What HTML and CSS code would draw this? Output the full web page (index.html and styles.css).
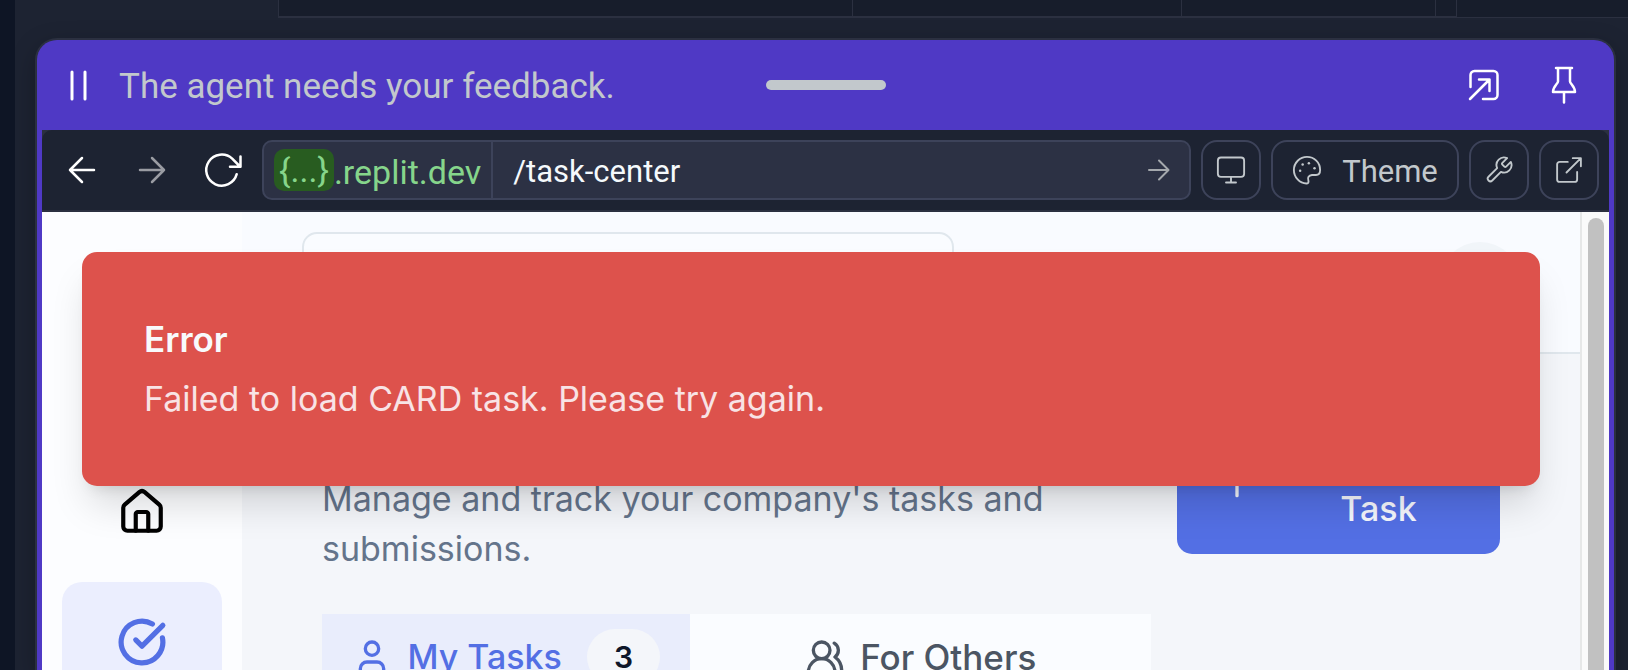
FILE: index.html
```html
<!DOCTYPE html>
<html lang="en">
<head>
<meta charset="utf-8">
<meta name="viewport" content="width=device-width, initial-scale=1">
<title>Task Center</title>
<link rel="stylesheet" href="styles.css">
</head>
<body>
<div class="workspace">
  <div class="panes">
    <div class="pane pane-a"></div>
    <div class="pane pane-b"></div>
    <div class="pane pane-c"></div>
    <div class="pane pane-d"></div>
    <div class="pane-end"></div>
  </div>

  <section class="window">
    <header class="titlebar">
      <div class="status">
        <svg class="pause" viewBox="0 0 22 34" aria-hidden="true"><path d="M5 4v27M18 4v27"/></svg>
        <span>The agent needs your feedback.</span>
      </div>
      <div class="handle"></div>
      <div class="window-actions">
        <button type="button" class="ghost" aria-label="Pop out">
          <svg viewBox="0 0 32 32" aria-hidden="true"><path d="M2.500 18V6a4 4 0 0 1 4-4h19a4 4 0 0 1 4 4v20a4 4 0 0 1-4 4H15M2 30 21.500 10.500M11 10.500h10.500V22"/></svg>
        </button>
        <button type="button" class="ghost" aria-label="Pin">
          <svg class="pin" viewBox="0 0 26 38" aria-hidden="true"><path d="M5 2h16M7 2v13.500c0 2-5 5-5 10.500h22c0-5.500-5-8.500-5-10.500V2M13 26v10.500"/></svg>
        </button>
      </div>
    </header>

    <div class="browser">
      <nav class="toolbar" aria-label="Preview">
        <button type="button" class="nav-button" aria-label="Back">
          <svg viewBox="0 0 28 28" aria-hidden="true"><path d="M26 14H2M14 26 2 14 14 2"/></svg>
        </button>
        <button type="button" class="nav-button muted" aria-label="Forward">
          <svg viewBox="0 0 28 28" aria-hidden="true"><path d="M2 14h24M14 2l12 12-12 12"/></svg>
        </button>
        <button type="button" class="nav-button" aria-label="Reload">
          <svg class="reload" viewBox="0 0 38 36" aria-hidden="true"><path d="M33.700 22.200A15.500 15.500 0 1 1 29.200 6.700L36.500 14M37.500 4.500v10.300H27"/></svg>
        </button>
        <div class="address">
          <span class="domain"><span class="host">{...}</span><span class="suffix">.replit.dev</span></span>
          <input class="path" type="text" value="/task-center" aria-label="Path">
          <button type="button" class="go" aria-label="Go">
            <svg viewBox="0 0 22 22" aria-hidden="true"><path d="M1 11h19M11 1.500l9.500 9.500-9.500 9.500"/></svg>
          </button>
        </div>
        <button type="button" class="tool" aria-label="Device size">
          <svg viewBox="0 0 24 24" aria-hidden="true"><rect x="1.500" y="2" width="21" height="15.500" rx="2.500"/><path d="M12 17.500V22M8 22h8"/></svg>
        </button>
        <button type="button" class="tool theme">
          <svg viewBox="0 0 24 24" aria-hidden="true"><path d="M12 1.500C6.200 1.500 1.500 6.200 1.500 12S6.200 22.800 11.500 22.800c1.500 0 2-1 1.600-2.300-.9-2.400.3-4.300 2.900-4.500h3.200c2.200 0 3.300-1.600 3.300-4C22.500 6 17.800 1.500 12 1.500z"/><g class="dots"><circle cx="13.500" cy="6.500" r="1"/><circle cx="18" cy="10.500" r="1"/><circle cx="8.500" cy="7.500" r="1"/><circle cx="6.500" cy="12.500" r="1"/></g></svg>
          <span>Theme</span>
        </button>
        <button type="button" class="tool" aria-label="Developer tools">
          <svg viewBox="0 0 24 24" aria-hidden="true"><path d="M14.700 6.300a1 1 0 0 0 0 1.400l1.600 1.600a1 1 0 0 0 1.400 0l3.770-3.770a6 6 0 0 1-7.940 7.940l-6.910 6.910a2.120 2.120 0 0 1-3-3l6.910-6.910a6 6 0 0 1 7.940-7.940l-3.760 3.760z"/></svg>
        </button>
        <button type="button" class="tool" aria-label="Open in new tab">
          <svg viewBox="0 0 24 24" aria-hidden="true"><path d="M15 2.500h6.500V9M21.500 2.500 10 14M18.500 13.500v6a2 2 0 0 1-2 2h-12a2 2 0 0 1-2-2v-12a2 2 0 0 1 2-2H11"/></svg>
        </button>
      </nav>

      <div class="viewport">
        <aside class="sidebar">
          <a class="side-link" href="#home" aria-label="Home">
            <svg viewBox="0 0 24 24" aria-hidden="true"><path d="M15 21v-8a1 1 0 0 0-1-1h-4a1 1 0 0 0-1 1v8"/><path d="M3 10a2 2 0 0 1 .709-1.528l7-5.999a2 2 0 0 1 2.582 0l7 5.999A2 2 0 0 1 21 10v9a2 2 0 0 1-2 2H5a2 2 0 0 1-2-2z"/></svg>
          </a>
          <a class="side-link active" href="#tasks" aria-label="Task center">
            <svg viewBox="0 0 24 24" aria-hidden="true"><path d="M21.801 10A10 10 0 1 1 17 3.335"/><path d="m9 11 3 3L22 4"/></svg>
          </a>
        </aside>

        <div class="page">
          <header class="page-header">
            <input class="search" type="search" aria-label="Search">
            <div class="avatar"></div>
          </header>
          <main class="content">
            <div class="intro">
              <p class="intro-text">Manage and track your company's tasks and submissions.</p>
              <button type="button" class="create">
                <svg viewBox="0 0 24 24" aria-hidden="true"><path d="M5 12h14M12 5v14"/></svg>
                <span>Create<br>Task</span>
              </button>
            </div>
            <div class="tabs" role="tablist">
              <button type="button" class="tab selected" role="tab" aria-selected="true">
                <svg viewBox="0 0 24 24" aria-hidden="true"><path d="M19 21v-2a4 4 0 0 0-4-4H9a4 4 0 0 0-4 4v2"/><circle cx="12" cy="7" r="4"/></svg>
                <span>My Tasks</span>
                <span class="count">3</span>
              </button>
              <button type="button" class="tab" role="tab" aria-selected="false">
                <svg viewBox="0 0 24 24" aria-hidden="true"><path d="M18 21a8 8 0 0 0-16 0"/><circle cx="10" cy="8" r="5"/><path d="M22 20c0-3.370-2-6.500-4-8a5 5 0 0 0-.45-8.300"/></svg>
                <span>For Others</span>
              </button>
            </div>
          </main>
        </div>

        <div class="scrollbar"><div class="thumb"></div></div>

        <div class="toast" role="alert">
          <strong>Error</strong>
          <span>Failed to load CARD task. Please try again.</span>
        </div>
      </div>
    </div>
  </section>
</div>
</body>
</html>
```
FILE: styles.css
```css
* {
  box-sizing: border-box;
}

body {
  margin: 0;
  background: #0e1525;
  font-family: Inter, "Noto Sans", sans-serif;
  font-size: 34px;
  line-height: 50px;
}

button,
input {
  margin: 0;
  padding: 0;
  border: 0;
  background: none;
  color: inherit;
  font: inherit;
}

svg {
  display: block;
  flex: none;
  fill: none;
  stroke: currentColor;
  stroke-linecap: round;
  stroke-linejoin: round;
}

p {
  margin: 0;
}

.workspace {
  display: flex;
  flex-direction: column;
  height: 100vh;
  margin-left: 15px;
  overflow: hidden;
  background: #1d2332;
}

/* Editor panes behind the preview window */
.panes {
  display: flex;
  flex: none;
  height: 18px;
  margin-left: 263px;
}

.pane {
  border-left: 1px solid #2b3040;
  border-bottom: 2px solid #2b3040;
  background: #171d2b;
}

.pane-a { flex: 575; }
.pane-b { flex: 329; }
.pane-c { flex: 254; }
.pane-d { flex: 20; }

.pane-end {
  flex: 172;
  border-left: 1px solid #2b3040;
  border-bottom: 1px solid #2b3040;
  background: #171d2b;
}

/* Floating window */
.window {
  display: flex;
  flex: 1;
  flex-direction: column;
  min-height: 0;
  margin: 20px 12px 0 20px;
  padding: 0 5px;
  border: 2px solid #2b3040;
  border-bottom: 0;
  border-radius: 22px 22px 0 0;
  background: #4f39c5;
  box-shadow: 0 8px 24px rgba(0, 0, 0, 0.25);
}

.titlebar {
  display: grid;
  flex: none;
  grid-template-columns: 1fr auto 1fr;
  align-items: center;
  height: 90px;
  padding: 0 15px;
}

.status {
  display: flex;
  align-items: center;
  gap: 30px;
  padding-left: 10px;
  color: #c2c8cc;
  font-family: Roboto, "Noto Sans", sans-serif;
  font-size: 35px;
  white-space: nowrap;
}

.status span,
.suffix,
.theme span {
  padding-top: 3px;
}

.pause {
  width: 22px;
  height: 34px;
  color: #fff;
  stroke-width: 3;
}

.handle {
  width: 120px;
  height: 10px;
  border-radius: 5px;
  background: #c2c8cc;
}

.window-actions {
  display: flex;
  justify-content: flex-end;
  gap: 20px;
}

.ghost {
  display: grid;
  place-items: center;
  width: 60px;
  height: 60px;
  color: #fff;
}

.ghost svg {
  width: 32px;
  height: 32px;
  stroke-width: 2.5;
}

.ghost .pin {
  width: 26px;
  height: 38px;
}

.browser {
  display: flex;
  flex: 1;
  flex-direction: column;
  min-height: 0;
  background: #2b3040;
}

.toolbar {
  display: flex;
  flex: none;
  align-items: center;
  gap: 10px;
  height: 82px;
  padding: 0 10px;
  border-bottom: 2px solid #2b3040;
  border-radius: 10px 10px 0 0;
  background: #1d2332;
  color: #c2c8cc;
  font-family: Roboto, "Noto Sans", sans-serif;
}

.nav-button {
  display: grid;
  flex: none;
  place-items: center;
  width: 60px;
  height: 60px;
  color: #fff;
}

.nav-button svg {
  width: 28px;
  height: 28px;
  stroke-width: 2.5;
}

.nav-button .reload {
  width: 38px;
  height: 36px;
  overflow: visible;
}

.nav-button.muted {
  color: #9a9ca3;
}

.address {
  display: flex;
  flex: 1;
  align-items: center;
  min-width: 0;
  height: 60px;
  padding-left: 10px;
  border: 2px solid #3d435a;
  border-radius: 10px;
  background: #2c3144;
}

.domain {
  display: flex;
  align-items: center;
  height: 56px;
  padding-right: 10px;
  border-right: 2px solid #3d435a;
  color: #86d58b;
}

.host {
  padding: 0 5px;
  border-radius: 10px;
  background: #285c20;
  line-height: 42px;
}

.path {
  flex: 1;
  min-width: 0;
  height: 56px;
  padding: 3px 20px 0;
  color: #f5f9fc;
  font-size: 31px;
}

.go {
  display: grid;
  place-items: center;
  width: 60px;
  height: 56px;
  color: #a4a8ad;
}

.go svg {
  width: 22px;
  height: 22px;
  stroke-width: 2;
}

.tool {
  display: flex;
  flex: none;
  align-items: center;
  justify-content: center;
  width: 60px;
  height: 60px;
  border: 2px solid #3d435a;
  border-radius: 16px;
  font-size: 31px;
}

.tool svg {
  width: 30px;
  height: 30px;
  stroke-width: 1.5;
}

.tool.theme {
  gap: 20px;
  width: 188px;
}

.tool .dots {
  fill: currentColor;
  stroke: none;
}

/* Previewed site */
.viewport {
  position: relative;
  display: flex;
  flex: 1;
  min-height: 0;
  overflow: hidden;
  background: #f4f6fa;
}

.sidebar {
  display: flex;
  flex: none;
  flex-direction: column;
  gap: 10px;
  width: 200px;
  padding: 240px 20px 0;
  background: #fcfdff;
}

.side-link {
  display: grid;
  flex: none;
  place-items: center;
  height: 120px;
  border-radius: 20px;
  color: #000;
}

.side-link svg {
  width: 50px;
  height: 50px;
  stroke-width: 2;
}

.side-link.active {
  background: #ebeefe;
  color: #536fe4;
}

.side-link.active svg {
  stroke-width: 2.5;
}

.page {
  flex: 1;
  min-width: 0;
}

.page-header {
  display: flex;
  align-items: center;
  justify-content: space-between;
  height: 142px;
  padding: 0 60px;
  border-bottom: 2px solid #e0e7ed;
  background: #f9fbff;
}

.search {
  width: 652px;
  height: 100px;
  border: 2px solid #e0e7ed;
  border-radius: 15px;
  background: #fafcff;
}

.avatar {
  width: 80px;
  height: 80px;
  border-radius: 50%;
  background: #f1f5f9;
}

.content {
  padding: 40px 80px 0;
}

.intro {
  display: flex;
  align-items: center;
  justify-content: space-between;
  gap: 40px;
  margin-bottom: 40px;
}

.intro-text {
  flex: 1;
  padding-top: 80px;
  color: #64748b;
}

.create {
  display: flex;
  flex: none;
  align-items: center;
  gap: 40px;
  width: 323px;
  padding: 20px 40px;
  border-radius: 15px;
  background: #536fe4;
  color: #f5f7fd;
  font-weight: 500;
}

.create svg {
  width: 40px;
  height: 40px;
  stroke-width: 2;
}

.create span {
  flex: 1;
}

.tabs {
  display: grid;
  grid-template-columns: 4fr 5fr;
  width: 829px;
  background: #fafcff;
}

.tab {
  display: flex;
  align-items: center;
  justify-content: center;
  gap: 15px;
  padding: 15px 0;
  color: #4b5563;
  font-size: 35px;
  font-weight: 500;
}

.tab svg {
  width: 40px;
  height: 40px;
  stroke-width: 2;
}

.tab.selected {
  background: #e9edfc;
  color: #536fe4;
  font-size: 34px;
}

.count {
  margin-left: 10px;
  padding: 8px 27px;
  border-radius: 28px;
  background: #f4f6fa;
  color: #0f172a;
  font-size: 30px;
  font-weight: 600;
  line-height: 40px;
}

.scrollbar {
  flex: none;
  width: 29px;
  padding: 6px 5px 0 6px;
  border-left: 2px solid #e6e7e7;
  background: #fafafa;
}

.thumb {
  height: 100%;
  border-radius: 8px 8px 0 0;
  background: #c1c1c1;
}

.toast {
  position: absolute;
  top: 40px;
  right: 69px;
  left: 40px;
  display: flex;
  flex-direction: column;
  gap: 10px;
  padding: 62px;
  border-radius: 15px;
  background: #dd524c;
  box-shadow: 0 25px 38px -8px rgba(0, 0, 0, 0.15), 0 10px 15px -10px rgba(0, 0, 0, 0.15);
  color: #f8e3e5;
}

.toast strong {
  color: #f8fafc;
  font-size: 35px;
  font-weight: 600;
}
```
